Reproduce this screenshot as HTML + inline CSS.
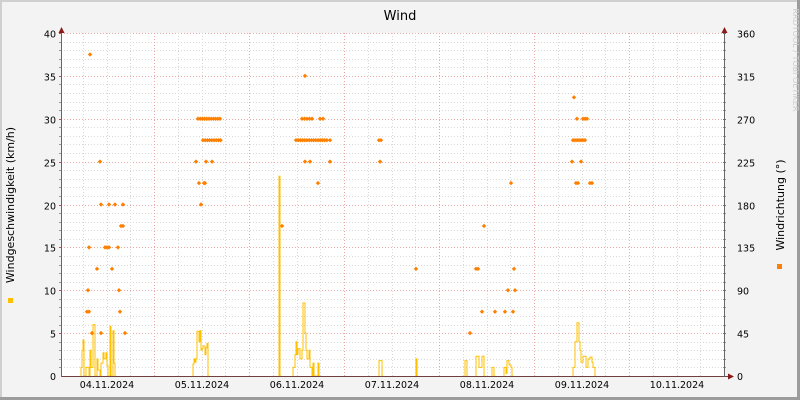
<!DOCTYPE html>
<html><head><meta charset="utf-8"><style>
html,body{margin:0;padding:0;background:#f3f3f3}
svg{display:block}
text{font-family:"DejaVu Sans","Liberation Sans",sans-serif}
</style></head><body>
<svg id="g" width="800" height="400" xmlns="http://www.w3.org/2000/svg">
<rect x="0" y="0" width="800" height="400" fill="#f3f3f3"/>
<rect x="0" y="0" width="800" height="2" fill="#cfcfcf"/>
<rect x="0" y="0" width="2" height="400" fill="#cfcfcf"/>
<rect x="0" y="397" width="800" height="3" fill="#9c9c9c"/>
<rect x="797" y="0" width="3" height="400" fill="#9c9c9c"/>
<rect x="61" y="33" width="663" height="343" fill="#fff"/>
<g id="grid"></g>
<g id="data"></g>
<text x="400" y="20" font-size="13" text-anchor="middle" fill="#000">Wind</text>
<text transform="translate(14,205) rotate(-90)" font-size="11" text-anchor="middle">Windgeschwindigkeit (km/h)</text>
<text transform="translate(784,205) rotate(-90)" font-size="11" text-anchor="middle">Windrichtung (°)</text>
<text transform="translate(793,60) rotate(90)" font-size="8" text-anchor="middle" fill="#cccccc">RRDTOOL / TOBI OETIKER</text>
<rect x="8" y="298" width="5" height="5" fill="#ffc000"/>
<rect x="777" y="264" width="5" height="5" fill="#ff8000"/>
</svg>
<script>
var ns="http://www.w3.org/2000/svg",grid=document.getElementById('grid'),data=document.getElementById('data');
function el(p,t,a,txt){var e=document.createElementNS(ns,t);for(var k in a)e.setAttribute(k,a[k]);if(txt!==undefined)e.textContent=txt;p.appendChild(e);return e;}
function Y(v){return 376-v*8.575;}
var L=61,R=724;
for(var v=1;v<=40;v++){var y=Math.round(Y(v))+0.5;var maj=v%5==0;
 el(grid,'line',{x1:L,x2:R,y1:y,y2:y,stroke:maj?'#e8a8a8':'#d8d8d8','stroke-dasharray':'1,2'});
 el(grid,'line',{x1:L-2,x2:L+1,y1:y,y2:y,stroke:maj?'#c05050':'#999'});
 el(grid,'line',{x1:R-1,x2:R+2,y1:y,y2:y,stroke:maj?'#c05050':'#999'});
 if(maj){el(grid,'text',{x:L-5,y:y+4,'font-size':'9.5','text-anchor':'end'},v);
  el(grid,'text',{x:R+13,y:y+4,'font-size':'9.5'},v*9);}}
el(grid,'text',{x:L-5,y:380,'font-size':'9.5','text-anchor':'end'},'0');
el(grid,'text',{x:R+13,y:380,'font-size':'9.5'},'0');
var dw=95,m0=154-dw;
for(var i=0;i<8*4;i++){var x=Math.round(m0+i*dw/4)+0.5;if(x<=L+1||x>=R-1)continue;var maj=i%4==0;
 el(grid,'line',{x1:x,x2:x,y1:33,y2:376,stroke:maj?'#e8a8a8':'#d8d8d8','stroke-dasharray':'1,2'});}
var days=['04.11.2024','05.11.2024','06.11.2024','07.11.2024','08.11.2024','09.11.2024','10.11.2024'];
for(var i=0;i<7;i++)el(grid,'text',{x:107+i*95,y:388,'font-size':'9.5','text-anchor':'middle'},days[i]);
var bars=[[81,1],[82,3],[83,4.2],[84,0],[86,1],[89,0],[90,3],[91,1],[93,6],[95,0],[97,2],[98,0.7],[100,0],[101,1.5],[103,2.7],[104,2],[106,2.7],[107,1.2],[108,0],[110,5.8],[111,0],[113,5.3],[114,1.5],[115,0],
[193,1.4],[194,2],[195,1.6],[196,2],[197,5.2],[199,4],[200,5.3],[201,3],[202,3.2],[203,3.5],[205,2.5],[206,3.3],[207,3.8],[208,0],
[279,23.3],[280,0],[293,1],[295,2.5],[296,4],[297,2.5],[298,3.2],[300,2],[302,3],[303,8.5],[305,5],[306,3],[307,2],[309,3],[310,1],[312,0],[313,1.5],[314,0],[318,1.5],[319,0],
[379,1.8],[382,0],[416,2],[417,0],
[465,1.8],[467,0],[476,2.3],[479,1],[482,2.3],[484,0],[492,1],[494,0],[504,1],[506,0.3],[507,1.8],[509,1.3],[511,1],[512,0],
[573,1],[575,4],[577,6.2],[579,4],[580,3],[581,1.6],[583,2.3],[586,1],[588,2],[590,2.2],[592,1.6],[593,1],[595,0]];
var d='M'+bars[0][0]+' '+Y(0);
for(var i=0;i<bars.length;i++){var b=bars[i],nx=i+1<bars.length?bars[i+1][0]:b[0]+1;
 if(i>0&&b[0]-bars[i-1][0]>6&&bars[i-1][1]==0)d+=' M'+b[0]+' '+Y(0);
 d+=' L'+b[0]+' '+Y(b[1]).toFixed(1);
 if(nx-b[0]>6){d+=' L'+(b[0]+1)+' '+Y(b[1]).toFixed(1)+' L'+(b[0]+1)+' '+Y(0);}
 else d+=' L'+nx+' '+Y(b[1]).toFixed(1);}
el(data,'path',{d:d,fill:'none',stroke:'#ffc000','stroke-width':'1'});
var pts=[[90,37.5],[87,7.5],[89,7.5],[88,10],[89,15],[92,5],[97,12.5],[100,25],[101,20],[101,5],[105,15],[107,15],[109,15],[109,20],[112,12.5],[115,20],[118,15],[119,10],[120,7.5],[121,17.5],[123,17.5],[123,20],[125,5],
[196,25],[199,22.5],[201,20],[204,22.5],[206,25],[212,25],[205,22.5]];
for(var x=198;x<=221;x+=2.2)pts.push([x,30]);
for(var x=203;x<=222;x+=2.2)pts.push([x,27.5]);
pts.push([282,17.5],[305,35],[305,25],[310,25],[318,22.5],[330,25],[330,27.5],[320,30],[323,30]);
for(var x=296;x<=327;x+=2.2)pts.push([x,27.5]);
for(var x=302;x<=312;x+=2.5)pts.push([x,30]);
pts.push([379,27.5],[381,27.5],[380,25],[416,12.5],[470,5],[476,12.5],[478,12.5],[482,7.5],[484,17.5],[495,7.5],[505,7.5],[508,10],[511,22.5],[513,7.5],[514,12.5],[515,10],
[574,32.5],[577,30],[583,30],[585,30],[587,30],[572,25],[581,25],[576,22.5],[578,22.5],[590,22.5],[592,22.5],[573,27.5]);
for(var x=575;x<=586;x+=2)pts.push([x,27.5]);
pts.forEach(function(p){var x=p[0],y=Y(p[1]);el(data,'path',{d:'M'+(x-2.2)+' '+y+'L'+x+' '+(y-2.2)+'L'+(x+2.2)+' '+y+'L'+x+' '+(y+2.2)+'Z',fill:'#ff8000'});});
el(data,'line',{x1:L,x2:R+4,y1:376.5,y2:376.5,stroke:'#704040'});
el(data,'line',{x1:L+0.5,x2:L+0.5,y1:30,y2:377,stroke:'#666'});
el(data,'line',{x1:R+0.5,x2:R+0.5,y1:30,y2:377,stroke:'#666'});
el(data,'path',{d:'M'+(L-2.5)+' 33 L'+(L+0.5)+' 27 L'+(L+3.5)+' 33Z',fill:'#8b1a1a'});
el(data,'path',{d:'M'+(R-2.5)+' 33 L'+(R+0.5)+' 27 L'+(R+3.5)+' 33Z',fill:'#8b1a1a'});
el(data,'path',{d:'M'+(R+4)+' 373.5 L'+(R+10)+' 376.5 L'+(R+4)+' 379.5Z',fill:'#8b1a1a'});
</script>
</body></html>
